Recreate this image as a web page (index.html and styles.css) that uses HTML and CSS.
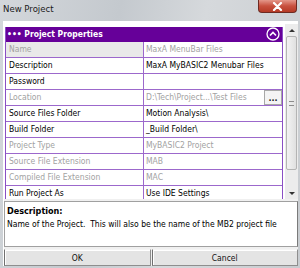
FILE: index.html
```html
<!DOCTYPE html>
<html lang="en">
<head>
    <meta charset="UTF-8">
    <title>New Project</title>
    <link rel="stylesheet" href="styles.css">
</head>
<body>
    <div class="window">
        <div class="titlebar">
            <span class="title">New Project</span>
            <button class="close" title="Close">
                <svg width="11" height="9" viewBox="0 0 11 9">
                    <path d="M2 1 L9 8 M9 1 L2 8" stroke="#fff" stroke-width="2.2" stroke-linecap="round"/>
                </svg>
            </button>
        </div>

        <div class="client">
            <div class="grid-area">
                <div class="grid">
                    <div class="grid-header">
                        <span>&bull;&bull;&bull; Project Properties</span>
                        <svg class="collapse" width="14" height="14" viewBox="0 0 14 14">
                            <circle cx="7" cy="7" r="6" fill="none" stroke="#fff" stroke-width="1.3"/>
                            <path d="M4 8.5 L7 5.5 L10 8.5" fill="none" stroke="#fff" stroke-width="1.6"/>
                        </svg>
                    </div>
                    <div class="row selected disabled">
                        <div class="label">Name</div>
                        <div class="value">MaxA MenuBar Files</div>
                    </div>
                    <div class="row">
                        <div class="label">Description</div>
                        <div class="value">MaxA MyBASIC2 Menubar Files</div>
                    </div>
                    <div class="row">
                        <div class="label">Password</div>
                        <div class="value"></div>
                    </div>
                    <div class="row disabled">
                        <div class="label">Location</div>
                        <div class="value">
                            <span>D:\Tech\Project...\Test Files</span>
                            <button class="browse">...</button>
                        </div>
                    </div>
                    <div class="row">
                        <div class="label">Source Files Folder</div>
                        <div class="value">Motion Analysis\</div>
                    </div>
                    <div class="row">
                        <div class="label">Build Folder</div>
                        <div class="value">_Build Folder\</div>
                    </div>
                    <div class="row disabled">
                        <div class="label">Project Type</div>
                        <div class="value">MyBASIC2 Project</div>
                    </div>
                    <div class="row disabled">
                        <div class="label">Source File Extension</div>
                        <div class="value">MAB</div>
                    </div>
                    <div class="row disabled">
                        <div class="label">Compiled File Extension</div>
                        <div class="value">MAC</div>
                    </div>
                    <div class="row">
                        <div class="label">Run Project As</div>
                        <div class="value">Use IDE Settings</div>
                    </div>
                </div>
                <div class="scrollbar">
                    <div class="arrow up"></div>
                    <div class="track">
                        <div class="thumb"><span class="grip"></span></div>
                    </div>
                    <div class="arrow down"></div>
                </div>
            </div>

            <div class="description">
                <div class="desc-title">Description:</div>
                <div class="desc-text">Name of the Project.&nbsp; This will also be the name of the MB2 project file</div>
            </div>

            <div class="buttons">
                <button class="btn">OK</button>
                <button class="btn">Cancel</button>
            </div>
        </div>
    </div>
</body>
</html>
```

FILE: styles.css
```css
body {
    margin: 0;
    background: #c9cdd1;
    font-family: "DejaVu Sans Condensed", "DejaVu Sans", sans-serif;
    font-stretch: condensed;
    font-size: 8.5px;
    color: #000;
}
.window {
    width: 300px;
    height: 268px;
    display: flex;
    flex-direction: column;
    background: linear-gradient(100deg, #d3d7db 0%, #c4c9ce 35%, #d6d9dc 60%, #c8ccd0 100%);
    overflow: hidden;
}
.titlebar {
    height: 21px;
    display: flex;
    align-items: flex-start;
    flex-shrink: 0;
}
.title {
    font-size: 9.5px;
    color: #1a1a1a;
    margin: 3px 0 0 3px;
}
.close {
    margin-left: auto;
    margin-right: 3px;
    width: 39px;
    height: 13px;
    padding: 0;
    border: 1px solid #6d2a22;
    border-top: none;
    border-radius: 0 0 4px 4px;
    background: linear-gradient(#e4978a, #c8503e 50%, #b53a26);
    display: flex;
    align-items: center;
    justify-content: center;
}
.client {
    flex: 1;
    margin: 0 2px 3px 3px;
    border-top: 1px solid #fff;
    border-left: 1px solid #fff;
    background: #f0f0f0;
    display: flex;
    flex-direction: column;
}
.grid-area {
    display: flex;
    height: 175px;
    flex-shrink: 0;
    padding: 2px 0 0 0;
    background: #fff;
    border-left: 1px solid #fff;
    overflow: hidden;
}
.grid {
    width: 278px;
    border-left: 1px solid #8a4fc4;
    border-right: 1px solid #8a4fc4;
    margin-top: 3px;
}
.grid-header {
    height: 14px;
    background: #660099;
    color: #fff;
    font-weight: bold;
    font-size: 8.5px;
    display: flex;
    align-items: center;
    justify-content: space-between;
    padding: 0 2px 0 1px;
    border-bottom: 1px solid #660099;
}
.collapse {
    display: block;
}
.row {
    display: flex;
    height: 15px;
    border-bottom: 1px solid #9c68cc;
    line-height: 15px;
}
.label {
    width: 134px;
    padding-left: 3px;
    border-right: 1px solid #9c68cc;
    white-space: nowrap;
}
.value {
    flex: 1;
    padding-left: 2px;
    display: flex;
    justify-content: space-between;
    white-space: nowrap;
    overflow: hidden;
}
.selected .label {
    background: #e9e9e9;
}
.disabled {
    color: #a2a2a2;
}
.browse {
    width: 18px;
    height: 15px;
    padding: 0;
    margin: 0 0 0 4px;
    border: 1px solid #a8a8a8;
    background: #f4f4f4;
    font: inherit;
    font-size: 9px;
    font-weight: bold;
    color: #222;
    line-height: 8px;
}
.scrollbar {
    width: 13px;
    margin-left: 2px;
    display: flex;
    flex-direction: column;
    background: #ececec;
}
.arrow {
    height: 12px;
    display: flex;
    align-items: center;
    justify-content: center;
}
.arrow::before {
    content: "";
    border-left: 3px solid transparent;
    border-right: 3px solid transparent;
}
.arrow.up::before {
    border-bottom: 3px solid #333;
}
.arrow.down::before {
    border-top: 3px solid #333;
}
.track {
    flex: 1;
    padding: 0 1px;
}
.thumb {
    height: 132px;
    border: 1px solid #b4b4b4;
    border-radius: 2px;
    background: linear-gradient(90deg, #f3f3f3, #e0e0e0);
    display: flex;
    align-items: center;
    justify-content: center;
}
.grip {
    width: 5px;
    height: 5px;
    border-top: 1px solid #8c8c8c;
    border-bottom: 1px solid #8c8c8c;
    box-sizing: border-box;
}
.description {
    height: 46px;
    flex-shrink: 0;
    margin: 2px 0 2px 0;
    background: #fff;
    border: 1px solid #a0a0a0;
    border-right-color: #7a7a7a;
    padding: 4px 2px;
    box-sizing: border-box;
}
.desc-title {
    font-weight: bold;
    font-size: 9px;
}
.desc-text {
    margin-top: 3px;
    white-space: nowrap;
}
.buttons {
    display: grid;
    grid-template-columns: 1fr 1fr;
    gap: 1px;
}
.btn {
    height: 17px;
    padding: 0;
    border: 1px solid #8e8e8e;
    border-top-color: #f4f4f4;
    border-left-color: #707070;
    background: #e4e4e4;
    font: inherit;
    color: #111;
    box-shadow: inset 1px 1px 0 #fff;
}
```
